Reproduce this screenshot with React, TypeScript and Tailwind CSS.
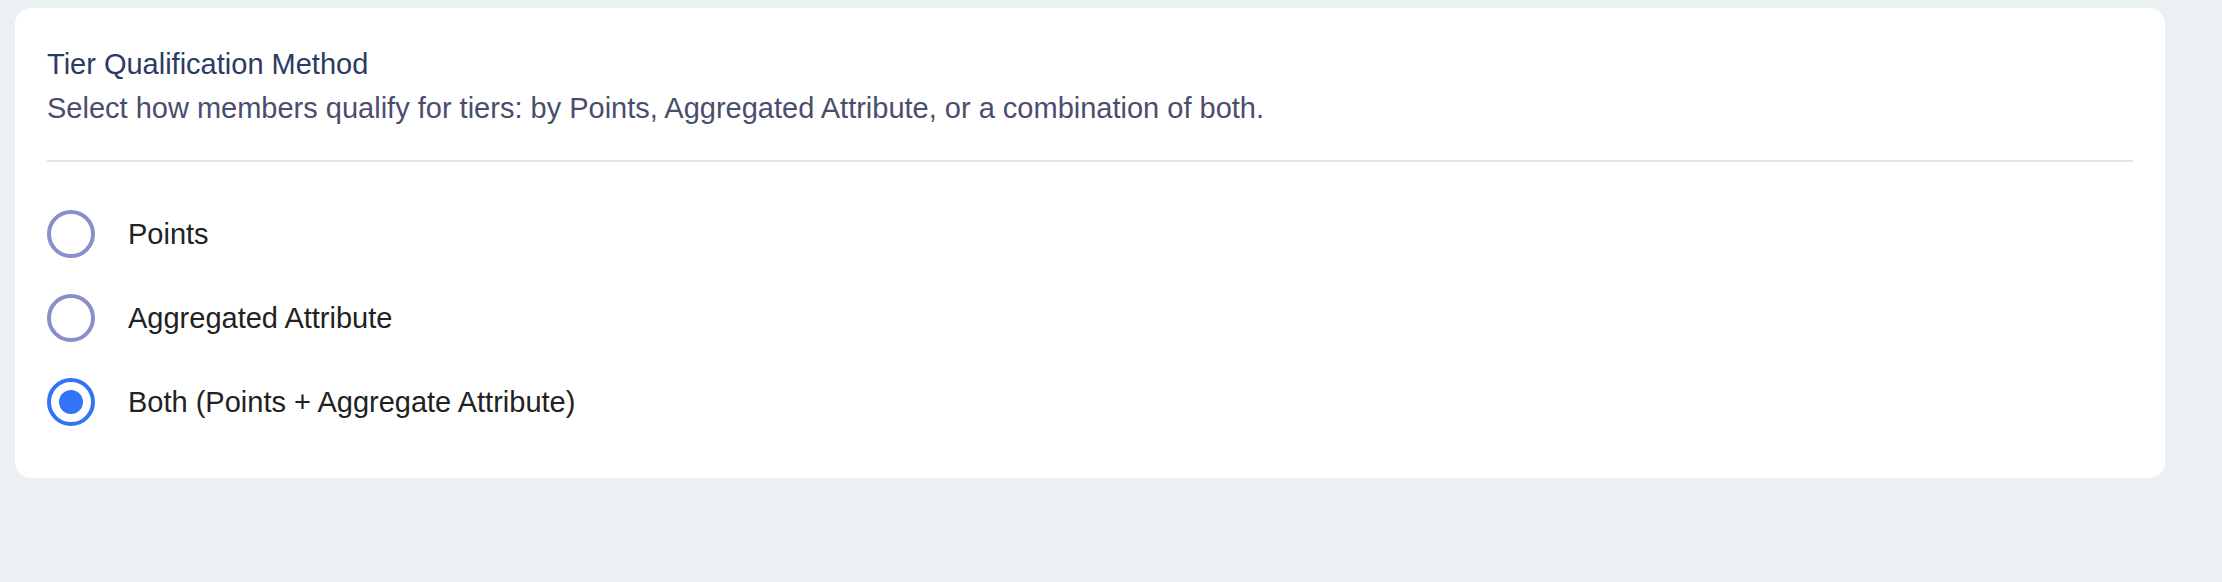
import { useState } from "react";

const options = [
    { id: "points", label: "Points" },
    { id: "attribute", label: "Aggregated Attribute" },
    { id: "both", label: "Both (Points + Aggregate Attribute)" },
];

export default function App() {
    const [selected, setSelected] = useState("both");

    return (
        <div className="min-h-screen bg-[#ebf0f3] pt-[8px] pl-[15px] font-[family-name:'Liberation_Sans',Arial,sans-serif]">
            <section className="w-[2150px] rounded-[16px] bg-white px-[32px] pt-[34px] pb-[52px]">
                {/* Header */}
                <h2 className="text-[29px] leading-[44px] font-normal text-[#2d3a63]">
                    Tier Qualification Method
                </h2>
                <p className="text-[29px] leading-[44px] text-[#4a4e6d]">
                    Select how members qualify for tiers: by Points, Aggregated Attribute, or a combination of both.
                </p>

                <div className="mt-[30px] h-[2px] bg-[#e4e4e6]" />

                {/* Options */}
                <div className="mt-[48px] flex flex-col gap-[36px]">
                    {options.map((opt) => {
                        const active = selected === opt.id;
                        return (
                            <label
                                key={opt.id}
                                className="flex cursor-pointer items-center gap-[33px]"
                                onClick={() => setSelected(opt.id)}
                            >
                                <span
                                    className={
                                        active
                                            ? "flex h-[48px] w-[48px] items-center justify-center rounded-full border-[4px] border-[#3274f6]"
                                            : "flex h-[48px] w-[48px] items-center justify-center rounded-full border-[4px] border-[#8a8ecb]"
                                    }
                                >
                                    {active && <span className="h-[24px] w-[24px] rounded-full bg-[#3274f6]" />}
                                </span>
                                <span className="text-[29px] leading-[44px] text-[#222222]">{opt.label}</span>
                            </label>
                        );
                    })}
                </div>
            </section>
        </div>
    );
}
